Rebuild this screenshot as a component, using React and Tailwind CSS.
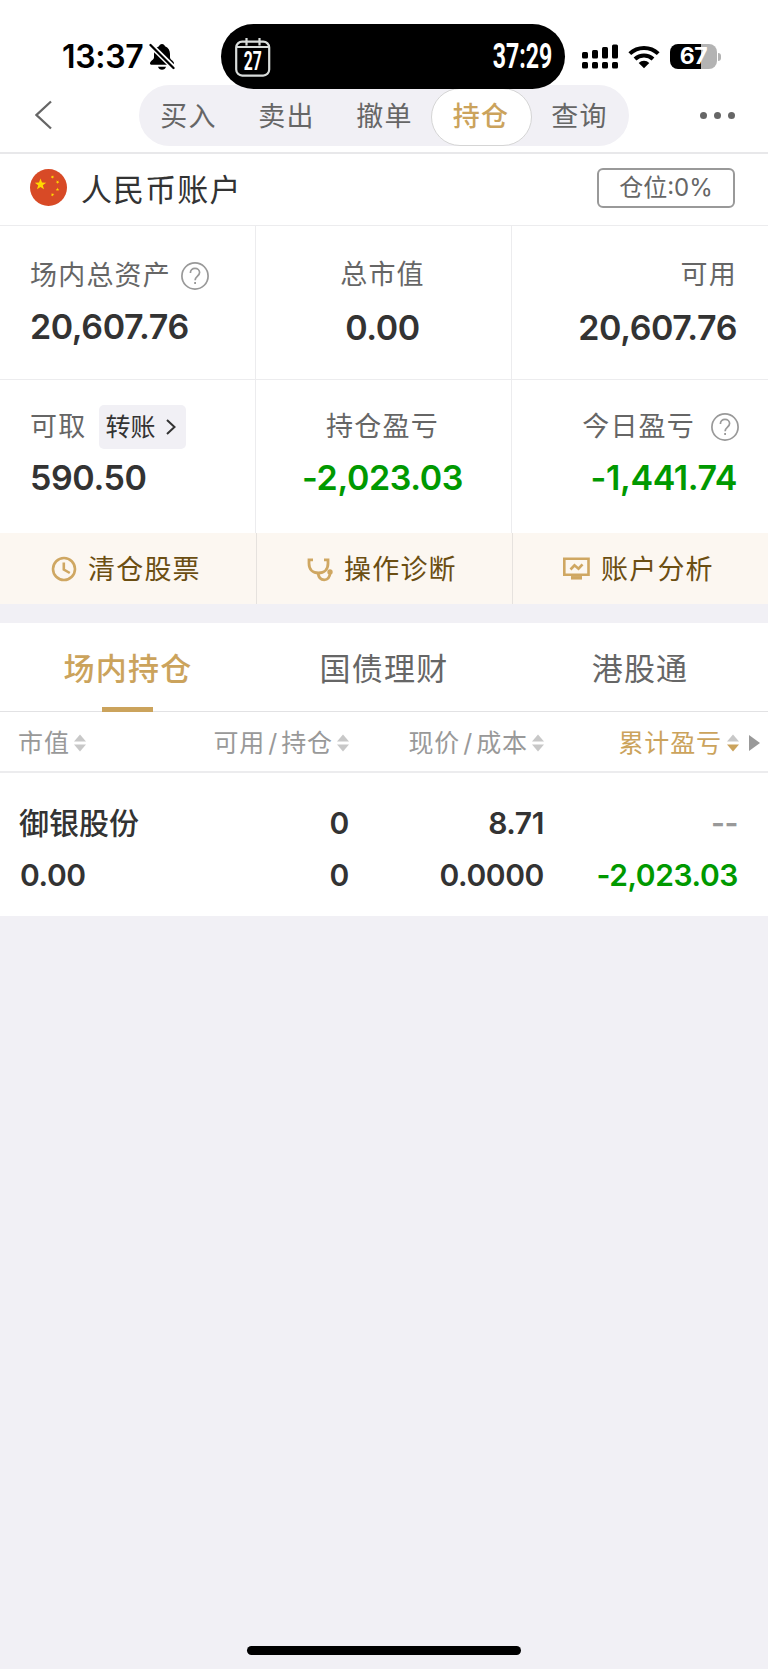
import React, { useState } from "react";

const navTabs = ["买入", "卖出", "撤单", "持仓", "查询"];
const holdingTabs = ["场内持仓", "国债理财", "港股通"];

function BellOff() {
  return (
    <svg width="26" height="28" viewBox="0 0 26 28" className="ml-[5px]">
      <path
        d="M13 1c-1.6 0-2.7 1-3 2.3C6.600 4.600 5 7.400 5 11v3.600c0 2.200-4 3.400-4 6 0 .7.500 1.100 1.200 1.100h21.600c.7 0 1.200-.4 1.200-1.100 0-2.600-4-3.800-4-6V11c0-3.600-1.600-6.400-5-7.700C15.700 2 14.600 1 13 1z"
      />
      <path d="M9 23.800h8c-.5 1.800-2 3-4 3s-3.500-1.200-4-3z" />
      <path d="M0 .5L26 26" stroke="#fff" strokeWidth="5.500" />
      <path d="M1.500 2L24.500 25" stroke="#000" strokeWidth="2.300" strokeLinecap="round" />
    </svg>
  );
}

function Calendar() {
  return (
    <svg width="36" height="40" viewBox="0 0 36 40" fill="none" stroke="#d9dddb">
      <rect x="1.200" y="4.600" width="33" height="34" rx="6" strokeWidth="2.200" />
      <path d="M1.500 10h32.500M11.500 1v7.500M24.500 1v7.500" strokeWidth="2.200" />
      <text
        x="17.800"
        y="33"
        textAnchor="middle"
        textLength="18"
        lengthAdjust="spacingAndGlyphs"
        fill="#fff"
        stroke="none"
        fontSize="25"
        fontWeight="700"
        fontFamily="Roboto, sans-serif"
      >
        27
      </text>
    </svg>
  );
}

function Signal() {
  const tops = [8, 6, 3, 0.5];
  return (
    <svg width="36" height="25" viewBox="0 0 36 25">
      {tops.map((y, i) => (
        <g key={i}>
          <rect x={i * 10} y={y} width="6" height={14.5 - y} rx="1.500" />
          <rect x={i * 10} y="18" width="6" height="6.500" rx="1.500" />
        </g>
      ))}
    </svg>
  );
}

function Wifi() {
  return (
    <svg width="32" height="24" viewBox="0 0 32 24" fill="none" stroke="#000" strokeWidth="4">
      <path d="M1.800 8.600a20.500 20.500 0 0 1 28.400 0" />
      <path d="M7 14a13 13 0 0 1 18 0" />
      <path d="M16 23.300l-5.300-5.300a7.600 7.600 0 0 1 10.600 0z" fill="#000" stroke="none" />
    </svg>
  );
}

function Battery() {
  return (
    <div className="flex items-center gap-px">
      <div className="flex h-[25px] w-[47px] items-center justify-center rounded-[8px] bg-linear-to-r from-black from-67% to-[#b3b3b3] to-67% text-[23px] leading-none font-bold tracking-[-0.5px] text-white">
        67
      </div>
      <div className="h-[8px] w-[3px] rounded-r-full bg-[#b3b3b3]" />
    </div>
  );
}

function Flag() {
  const star = "M0-6 1.500-1.900 5.700-1.850 2.300.75 3.500 4.850 0 2.400-3.500 4.850-2.300.75-5.700-1.850-1.500-1.900z";
  return (
    <svg width="37" height="37" viewBox="0 0 37 37" fill="#ffd900" className="-mt-1">
      <circle cx="18.500" cy="18.500" r="18.500" fill="#d84a26" />
      <path d={star} transform="translate(10.500 15.500)" />
      <path d={star} transform="translate(22.500 8) rotate(20) scale(.32)" />
      <path d={star} transform="translate(27.500 13) rotate(40) scale(.32)" />
      <path d={star} transform="translate(27.500 20.500) scale(.32)" />
      <path d={star} transform="translate(22.500 25.700) rotate(20) scale(.32)" />
    </svg>
  );
}

function Help({ className }) {
  return (
    <svg width="28" height="28" viewBox="0 0 28 28" fill="none" stroke="#999" strokeWidth="1.700" className={className}>
      <circle cx="14" cy="14" r="13.100" />
      <path d="M9.400 11c0-2.800 2-4.600 4.600-4.600s4.600 1.700 4.600 4.200c0 3.400-4.500 3.700-4.500 7.700" />
      <path d="M14.100 20v2" strokeWidth="1.800" />
    </svg>
  );
}

function SortIcon({ desc }) {
  return (
    <svg width="12" height="18" viewBox="0 0 12 18" className="ml-[4px]">
      <path d="M0 7.500 6 .5l6 7z" fill="#c8c8c8" />
      <path d="M0 10.500h12l-6 7z" fill={desc ? "#cba35c" : "#c8c8c8"} />
    </svg>
  );
}

function ClockIcon() {
  return (
    <svg width="26" height="26" viewBox="0 0 26 26" fill="none" stroke="#cfa762" strokeWidth="2.600">
      <circle cx="13" cy="13" r="11" />
      <path d="M12.800 6.500v7l6 3.500" />
    </svg>
  );
}

function StethoscopeIcon() {
  return (
    <svg width="26" height="26" viewBox="0 0 26 26" fill="none" stroke="#cfa762" strokeWidth="2.800">
      <path d="M6 3.800H2v3.700c0 6 4 9.500 9.500 9.500S21 13.500 21 7.500V3.800h-4" />
      <path d="M11 17c.6 4.500 3 6.800 6.200 6.800 3.600 0 5.600-2.500 6-7.300" />
      <circle cx="23" cy="16" r="2.700" fill="#cfa762" stroke="none" />
    </svg>
  );
}

function MonitorIcon() {
  return (
    <svg width="27" height="26" viewBox="0 0 27 26" fill="none" stroke="#cfa762" strokeWidth="2.600">
      <path d="M1.300 2.800h24.200v16H1.300z" />
      <path d="M7.500 13.500l4-4.200 4 3.400 4-4.400" />
      <path d="M8 21.800h11" strokeWidth="3.500" />
    </svg>
  );
}

function StatusBar() {
  return (
    <div className="flex h-[85px] pt-6">
      <div className="flex h-[65px] w-[221px] shrink-0 items-center pl-[62px]">
        <span className="w-[82px] text-[32px] leading-none font-semibold tracking-[-0.300px]">13:37</span>
        <BellOff />
      </div>
      <div className="z-10 flex h-[65px] w-[344px] shrink-0 items-center justify-between rounded-full bg-black pr-[13px] pl-[14px]">
        <Calendar />
        <span className="origin-right scale-x-[0.66] font-['Roboto',sans-serif] text-[35px] leading-[42px] font-bold text-white">
          37:29
        </span>
      </div>
      <div className="flex h-[65px] items-center gap-[10px] pl-[17px]">
        <Signal />
        <Wifi />
        <Battery />
      </div>
    </div>
  );
}

function NavBar({ active, onChange }) {
  return (
    <div className="flex h-[69px] border-b-2 border-[#e8e8ea]">
      <div className="w-[139px] pt-[15px] pl-[35px]">
        <svg width="17" height="30" viewBox="0 0 17 30" fill="none" stroke="#666" strokeWidth="2.300">
          <path d="M16 1.500 1.500 15 16 28.500" />
        </svg>
      </div>
      <div className="flex h-[61px] w-[490px] justify-center rounded-full bg-[#f1f0f5]">
        {navTabs.map((tab) => (
          <button
            key={tab}
            onClick={() => onChange(tab)}
            className={
              tab === active
                ? "mt-[3px] -mr-px -ml-[3px] h-[58px] w-[101px] rounded-full border border-[#d5d5d5] bg-white pb-[1px] text-[27px] leading-none font-medium tracking-[1.200px] text-[#cba35c]"
                : "h-[61px] w-[98px] pt-[2px] text-[27px] leading-none tracking-[1.200px] text-[#666]"
            }
          >
            {tab}
          </button>
        ))}
      </div>
      <div className="flex gap-[7px] pt-[27px] pl-[71px]">
        <i className="h-[7px] w-[7px] rounded-full bg-[#666]" />
        <i className="h-[7px] w-[7px] rounded-full bg-[#666]" />
        <i className="h-[7px] w-[7px] rounded-full bg-[#666]" />
      </div>
    </div>
  );
}

const label = "text-[27px] leading-[42px] tracking-[1.200px] text-[#666]";
const value = "text-[34px] leading-10 font-semibold tracking-[-0.400px]";

function Summary() {
  return (
    <div className="grid grid-cols-[256px_256px_256px] grid-rows-[154px_153px]">
      <div className="border-r border-b border-[#ececee] pt-[29px] pl-[30px]">
        <div className="flex items-center">
          <span className={label}>场内总资产</span>
          <Help className="ml-[10px]" />
        </div>
        <div className={`mt-[10px] text-[#333] ${value}`}>20,607.76</div>
      </div>
      <div className="border-r border-b border-[#ececee] pt-7 pr-[2px] text-center">
        <div className={label}>总市值</div>
        <div className={`mt-[12px] text-[#333] ${value}`}>0.00</div>
      </div>
      <div className="border-b border-[#ececee] pt-7 pr-[31px] text-right">
        <div className={label}>可用</div>
        <div className={`mt-[12px] text-[#333] ${value}`}>20,607.76</div>
      </div>

      <div className="border-r border-[#ececee] pt-[26px] pl-[30px]">
        <div className="flex h-[42px] items-center">
          <span className={label}>可取</span>
          <span className="ml-[13px] flex h-[44px] w-[87px] items-center rounded-[5px] bg-[#f1f0f5] pl-[6px] text-[25px] leading-none text-[#333]">
            转账
            <svg width="10" height="16" viewBox="0 0 10 16" fill="none" stroke="#333" strokeWidth="2" className="ml-[11px]">
              <path d="M1 1l7.500 7L1 15" />
            </svg>
          </span>
        </div>
        <div className={`mt-[10px] text-[#333] ${value}`}>590.50</div>
      </div>
      <div className="border-r border-[#ececee] pt-[26px] pr-[2px] text-center">
        <div className={label}>持仓盈亏</div>
        <div className={`mt-[10px] text-[#090] ${value}`}>-2,023.03</div>
      </div>
      <div className="pt-[26px] pr-[31px] text-right">
        <div className="-mr-[2px] flex items-center justify-end">
          <span className={label}>今日盈亏</span>
          <Help className="ml-[16px]" />
        </div>
        <div className={`mt-[10px] text-[#090] ${value}`}>-1,441.74</div>
      </div>
    </div>
  );
}

function Shortcuts() {
  const items = [
    { text: "清仓股票", Icon: ClockIcon },
    { text: "操作诊断", Icon: StethoscopeIcon },
    { text: "账户分析", Icon: MonitorIcon },
  ];
  return (
    <div className="grid h-[71px] grid-cols-[257px_256px_255px] bg-[#fcf7f1]">
      {items.map(({ text, Icon }, i) => (
        <div
          key={text}
          className={`flex items-center ${i === 0 ? "pl-[51px]" : "pl-[50px]"} ${i < 2 ? "border-r border-[#e6e2de]" : ""}`}
        >
          <Icon />
          <span className="ml-[11px] pt-[2px] text-[27px] leading-none tracking-[1.200px] text-[#6b4e12]">{text}</span>
        </div>
      ))}
    </div>
  );
}

function Holdings() {
  const head = "flex items-center pt-[3px] text-[25px] leading-none tracking-[0.900px]";
  return (
    <div className="bg-white">
      <div className="grid h-[89px] grid-cols-3 border-b border-[#e2e2e4]">
        {holdingTabs.map((tab, i) => (
          <div
            key={tab}
            className={`relative flex items-center justify-center pt-[2px] text-[31px] leading-none tracking-[1.200px] ${i === 0 ? "font-medium text-[#cba35c]" : "text-[#666]"}`}
          >
            {tab}
            {i === 0 && <i className="absolute -bottom-px left-[102px] h-[5px] w-[51px] bg-[#cba35c]" />}
          </div>
        ))}
      </div>

      <div className="grid h-[61px] grid-cols-[150px_199px_195px_195px_29px] border-b-2 border-[#ececee] text-[#999]">
        <div className={`${head} pl-[18px]`}>市值<SortIcon /></div>
        <div className={`${head} justify-end`}>可用<span className="px-[3px]">/</span>持仓<SortIcon /></div>
        <div className={`${head} justify-end`}>现价<span className="px-[3px]">/</span>成本<SortIcon /></div>
        <div className={`${head} justify-end text-[#cba35c]`}>
          <span className="mr-px">累计盈亏</span>
          <SortIcon desc />
        </div>
        <div className="flex items-center pt-[3px] pl-[10px]">
          <svg width="11" height="16" viewBox="0 0 11 16" fill="#999">
            <path d="M0 0l11 8-11 8z" />
          </svg>
        </div>
      </div>

      <div className="grid h-[143px] grid-cols-[150px_199px_195px_194px] content-start gap-y-[12px] pt-[30px] text-right text-[30px] leading-10 font-semibold tracking-[-0.400px] text-[#333]">
        <div className="pl-[19px] text-left font-medium tracking-normal">御银股份</div>
        <div>0</div>
        <div>8.71</div>
        <div className="text-[#999]">--</div>
        <div className="pl-[20px] text-left">0.00</div>
        <div>0</div>
        <div>0.0000</div>
        <div className="text-[#090]">-2,023.03</div>
      </div>
    </div>
  );
}

export default function App() {
  const [active, setActive] = useState("持仓");

  return (
    <div className="flex h-[1669px] w-[768px] flex-col overflow-hidden bg-[#f1f0f5] font-['Inter','Noto_Sans_CJK_SC',sans-serif]">
      <div className="bg-white">
        <StatusBar />
        <NavBar active={active} onChange={setActive} />
        <div className="flex h-[72px] items-center border-b border-[#ececee] pr-[33px] pl-[30px]">
          <Flag />
          <span className="ml-[14px] text-[31px] leading-none tracking-[1.100px] text-[#333]">人民币账户</span>
          <span className="-mt-1 ml-auto flex h-[40px] w-[138px] items-center justify-center rounded-[6px] border-2 border-[#999] text-[24px] leading-none text-[#666]">
            仓位:0%
          </span>
        </div>
        <Summary />
      </div>
      <Shortcuts />
      <div className="h-[19px]" />
      <Holdings />
      {/* home indicator */}
      <div className="mx-auto mt-auto mb-[14px] h-[9px] w-[274px] rounded-full bg-black" />
    </div>
  );
}
